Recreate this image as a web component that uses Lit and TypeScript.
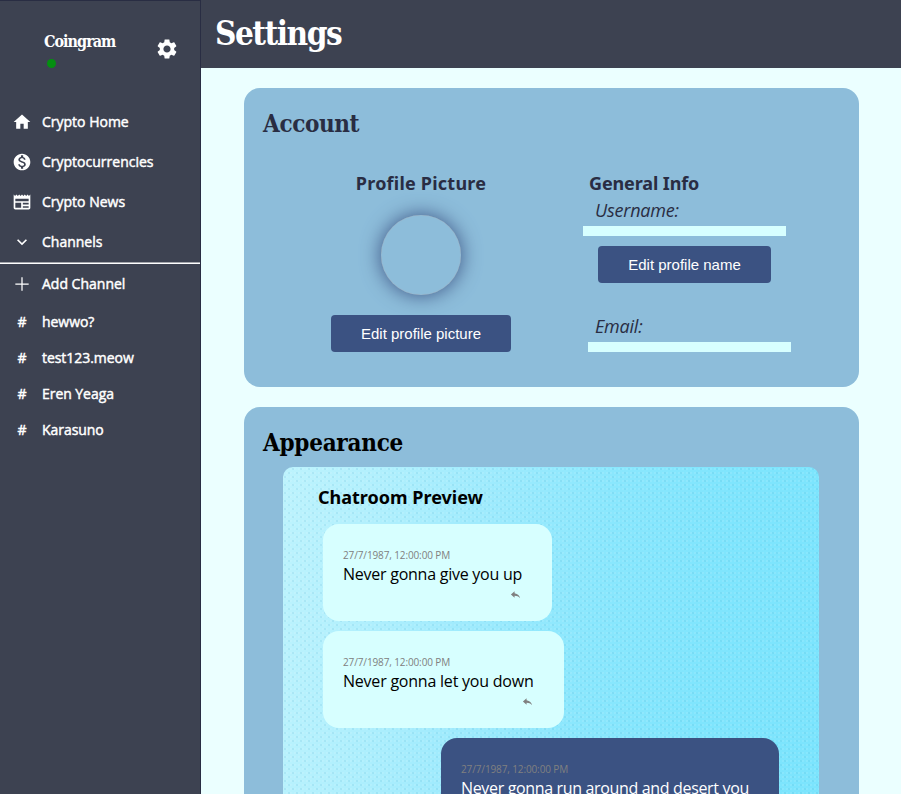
import { LitElement, html, css, svg } from "lit";

const icons: Record<string, unknown> = {
  home: svg`<path d="M10 20v-6h4v6h5v-8h3L12 3 2 12h3v8z"/>`,
  coin: svg`<path d="M12 2C6.48 2 2 6.48 2 12s4.48 10 10 10 10-4.48 10-10S17.52 2 12 2zm1.41 16.09V20h-2.67v-1.93c-1.71-.36-3.16-1.46-3.27-3.4h1.96c.1 1.05.82 1.87 2.65 1.87 1.96 0 2.4-.98 2.4-1.59 0-.83-.44-1.61-2.67-2.14-2.48-.6-4.18-1.62-4.18-3.67 0-1.72 1.39-2.84 3.11-3.21V4h2.67v1.95c1.86.45 2.79 1.86 2.85 3.39H14.3c-.05-1.11-.64-1.87-2.22-1.87-1.5 0-2.4.68-2.4 1.64 0 .84.65 1.39 2.67 1.91s4.18 1.39 4.18 3.91c-.01 1.83-1.38 2.83-3.12 3.16z"/>`,
  news: svg`<path d="M22 3l-1.67 1.67L18.67 3 17 4.67 15.33 3l-1.66 1.67L12 3l-1.67 1.67L8.67 3 7 4.67 5.33 3 3.67 4.67 2 3v16c0 1.1.9 2 2 2h16c1.1 0 2-.9 2-2V3zM11 19H4v-6h7v6zm9 0h-7v-2h7v2zm0-4h-7v-2h7v2zm0-4H4V8h16v3z"/>`,
  chevron: svg`<path d="M7.41 8.59 12 13.17l4.59-4.58L18 10l-6 6-6-6z"/>`,
  plus: svg`<path d="M20 12.750h-7.250V20h-1.500v-7.250H4v-1.500h7.250V4h1.500v7.250H20z"/>`,
  gear: svg`<path d="M19.14 12.94c.04-.3.06-.61.06-.94 0-.32-.02-.64-.07-.94l2.03-1.58c.18-.14.23-.41.12-.61l-1.92-3.32c-.12-.22-.37-.29-.59-.22l-2.39.96c-.5-.38-1.03-.7-1.62-.94l-.36-2.54c-.04-.24-.24-.41-.48-.41h-3.84c-.24 0-.43.17-.47.41l-.36 2.54c-.59.24-1.13.57-1.62.94l-2.39-.96c-.22-.08-.47 0-.59.22L2.74 8.87c-.12.21-.08.47.12.61l2.03 1.58c-.05.3-.09.63-.09.94s.02.64.07.94l-2.03 1.58c-.18.14-.23.41-.12.61l1.92 3.32c.12.22.37.29.59.22l2.39-.96c.5.38 1.03.7 1.62.94l.36 2.54c.05.24.24.41.48.41h3.84c.24 0 .44-.17.47-.41l.36-2.54c.59-.24 1.13-.56 1.62-.94l2.39.96c.22.08.47 0 .59-.22l1.92-3.32c.12-.22.07-.47-.12-.61l-2.01-1.58zM12 15.6c-1.98 0-3.6-1.62-3.6-3.6s1.62-3.6 3.6-3.6 3.6 1.62 3.6 3.6-1.62 3.6-3.6 3.6z"/>`,
  reply: svg`<path d="M10 9V5l-8 7 8 7v-4.100c5 0 8.500 1.600 12 5.100-1-5-5-10-12-11z"/>`,
};
const icon = (name: string) => html`<svg class="icon ${name}" viewBox="0 0 24 24">${icons[name]}</svg>`;

const links = [
  { icon: "home", label: "Crypto Home" },
  { icon: "coin", label: "Cryptocurrencies" },
  { icon: "news", label: "Crypto News" },
  { icon: "chevron", label: "Channels" },
];
const channels = ["hewwo?", "test123.meow", "Eren Yeaga", "Karasuno"];
const messages = [
  { text: "Never gonna give you up", kind: "up" },
  { text: "Never gonna let you down", kind: "down" },
  { text: "Never gonna run around and desert you", kind: "own" },
];

class AppRoot extends LitElement {
  static styles = css`
    :host { display: block; height: 794px; overflow: hidden; font-family: "Open Sans", "Noto Sans", sans-serif; color: #000; }
    * { box-sizing: border-box; }
    h1, h2, h3, p { margin: 0; }
    .app { display: flex; height: 794px; overflow: hidden; background: #ebffff; }
    .icon { display: block; width: 20px; height: 20px; fill: currentColor; flex: none; }
    .sidebar { width: 201px; flex: none; background: #3d4251; color: #fff; border-top: 1px solid #292d43; border-right: 1px solid #292d43; }
    .brand { display: flex; height: 101px; padding: 31px 21px 0 44px; justify-content: space-between; }
    .name { font: bold 16px/20px "DejaVu Serif Condensed", "DejaVu Serif", serif; font-stretch: condensed; letter-spacing: -0.98px; }
    .status { width: 9px; height: 9px; border-radius: 50%; background: #048f10; margin: 7px 0 0 2.5px; }
    .gear { width: 24px; height: 24px; margin-top: 5px; }
    .row { display: flex; align-items: center; height: 40px; padding-left: 12px; gap: 10px; font-size: 14px; font-weight: 500; line-height: 20px; white-space: nowrap; -webkit-text-stroke: 0.45px #fff; }
    .row.channel { height: 36px; letter-spacing: -0.05px; }
    .row .icon { -webkit-text-stroke: 0; stroke: none; }
    .divider { height: 2px; background: linear-gradient(#a4a6ac 50%, #fff 50%); }
    .hash { width: 20px; text-align: center; }
    .main { flex: 1; min-width: 0; }
    .top { height: 68px; background: #3d4251; padding: 14px 14px; }
    h1, h2 { font-family: "DejaVu Serif Condensed", "DejaVu Serif", serif; font-stretch: condensed; font-weight: bold; }
    h1 { color: #fff; font-size: 33px; line-height: 40px; letter-spacing: -1.5px; }
    .content { padding: 20px 42px 0 43px; display: flex; flex-direction: column; gap: 20px; }
    .card { background: #8dbdda; border-radius: 16px; padding: 21px 20px 20px 19px; }
    h2 { font-size: 24px; line-height: 30px; letter-spacing: -0.38px; }
    .appearance h2 { letter-spacing: -0.26px; }
    h3 { font: bold 18px/22px "Noto Sans", sans-serif; }
    .account { height: 299px; color: #292d43; }
    .columns { display: grid; grid-template-columns: 314px 1fr; margin: 33px 0 0 1px; }
    .picture { display: flex; flex-direction: column; align-items: center; }
    .picture h3 { letter-spacing: 0.22px; }
    .avatar { width: 80px; height: 80px; margin: 21px 0 20px; border-radius: 50%; box-shadow: 0 0 20px #3b5282, inset 0 0 1px #b8b3b5; }
    .button { height: 37px; border: 0; border-radius: 4px; background: #3b5282; color: #fff; font: 15px "Liberation Sans", sans-serif; padding: 0; width: 180px; }
    .info { padding-left: 5px; }
    .info h3 { padding-left: 6px; letter-spacing: -0.12px; }
    .label { font-size: 18px; line-height: 24px; font-style: italic; padding: 4px 0 0 12px; letter-spacing: -0.22px; }
    .field { width: 203px; height: 10px; background: #d7ffff; margin-top: 4px; }
    .info .button { display: block; width: 173px; margin: 10px 0 27px 15px; }
    .email { margin-left: 5px; }
    .appearance { height: 520px; }
    .room { margin: 9px 20px 0 20px; height: 480px; border-radius: 10px; padding: 19px 40px 0;
      background:
        radial-gradient(circle at 2px 2px, #2789ae30 0, #2789ae00 1.5px) 0 0 / 8px 8px,
        radial-gradient(circle at 6px 6px, #2789ae30 0, #2789ae00 1.5px) 0 0 / 8px 8px,
        radial-gradient(circle at 2px 2px, #ffffff30 0, #ffffff00 1.4px) 2px 0 / 4px 4px,
        linear-gradient(98deg, #bdf3fd 0%, #b2f0fd 15%, #a0ebfd 33%, #8ae7fd 55%, #7fe5fd 75%, #7be4fd 100%); }
    .room h3 { margin-left: -5px; }
    .messages { display: flex; flex-direction: column; align-items: flex-start; gap: 10px; margin-top: 16px; }
    .bubble { width: 229px; height: 97px; padding: 20px 31px 0 20px; border-radius: 16px; background: #d7ffff; white-space: nowrap; font-size: 16px; line-height: 24px; letter-spacing: -0.25px; }
    .bubble.down { width: 241px; letter-spacing: -0.22px; }
    .bubble.own { width: 338px; background: #3b5282; color: #fff; align-self: flex-end; letter-spacing: -0.34px; }
    .time { font-size: 10px; line-height: 14px; color: #808080; letter-spacing: -0.12px; padding-top: 4px; }
    .reply { width: 11px; height: 11px; color: #808080; margin: 3px 0 0 auto; }
  `;

  render() {
    return html`<div class="app">
      <nav class="sidebar">
        <div class="brand">
          <div><div class="name">Coingram</div><div class="status"></div></div>
          ${icon("gear")}
        </div>
        ${links.map((l) => html`<div class="row">${icon(l.icon)}<span>${l.label}</span></div>`)}
        <div class="divider"></div>
        <div class="row">${icon("plus")}<span>Add Channel</span></div>
        ${channels.map((c) => html`<div class="row channel"><span class="hash">#</span><span>${c}</span></div>`)}
      </nav>
      <main class="main">
        <header class="top"><h1>Settings</h1></header>
        <div class="content">
          <section class="card account">
            <h2>Account</h2>
            <div class="columns">
              <div class="picture">
                <h3>Profile Picture</h3>
                <div class="avatar"></div>
                <button class="button">Edit profile picture</button>
              </div>
              <div class="info">
                <h3>General Info</h3>
                <p class="label">Username:</p>
                <div class="field"></div>
                <button class="button">Edit profile name</button>
                <p class="label">Email:</p>
                <div class="field email"></div>
              </div>
            </div>
          </section>
          <section class="card appearance">
            <h2>Appearance</h2>
            <div class="room">
              <h3>Chatroom Preview</h3>
              <div class="messages">
                ${messages.map((m) => html`<div class="bubble ${m.kind}">
                  <p class="time">27/7/1987, 12:00:00 PM</p>
                  <p>${m.text}</p>
                  ${icon("reply")}
                </div>`)}
              </div>
            </div>
          </section>
        </div>
      </main>
    </div>`;
  }
}
customElements.define("app-root", AppRoot);
